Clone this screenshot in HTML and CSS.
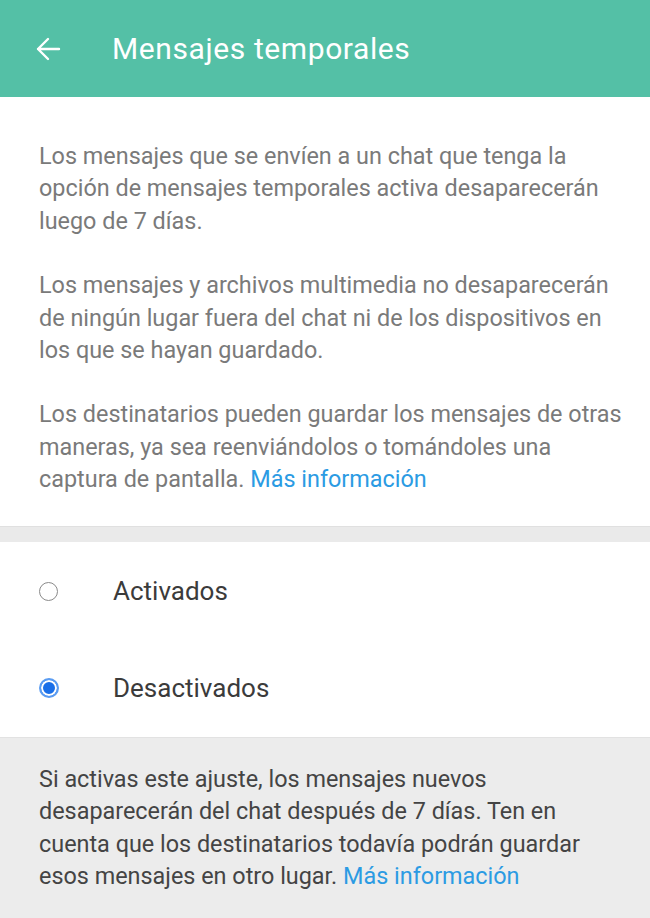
FILE: index.html
```html
<!DOCTYPE html>
<html lang="es">

<head>
    <meta charset="UTF-8">
    <meta name="viewport" content="width=device-width, initial-scale=1.0">
    <title>Mensajes temporales</title>
    <link rel="stylesheet" href="styles.css">
</head>

<body>
    <header class="topbar">
        <button class="back" aria-label="Volver">
            <svg width="28" height="28" viewBox="0 0 28 28">
                <path d="M25 14H4M14 4L4 14l10 10" fill="none" stroke="#fff" stroke-width="2.4"
                    stroke-linecap="round" stroke-linejoin="round" />
            </svg>
        </button>
        <h1>Mensajes temporales</h1>
    </header>

    <main>
        <section class="intro">
            <p>
                Los mensajes que se envíen a un chat que tenga la<br>
                opción de mensajes temporales activa desaparecerán<br>
                luego de 7 días.
            </p>
            <p>
                Los mensajes y archivos multimedia no desaparecerán<br>
                de ningún lugar fuera del chat ni de los dispositivos en<br>
                los que se hayan guardado.
            </p>
            <p>
                Los destinatarios pueden guardar los mensajes de otras<br>
                maneras, ya sea reenviándolos o tomándoles una<br>
                captura de pantalla. <a href="#">Más información</a>
            </p>
        </section>

        <div class="divider"></div>

        <section class="options">
            <label class="option">
                <span class="radio"></span>
                <span class="option-label">Activados</span>
            </label>
            <label class="option">
                <span class="radio checked"></span>
                <span class="option-label">Desactivados</span>
            </label>
        </section>

        <section class="note">
            <p>
                Si activas este ajuste, los mensajes nuevos<br>
                desaparecerán del chat después de 7 días. Ten en<br>
                cuenta que los destinatarios todavía podrán guardar<br>
                esos mensajes en otro lugar. <a href="#">Más información</a>
            </p>
        </section>
    </main>
</body>

</html>
```

FILE: styles.css
```css
body {
    margin: 0;
    width: 650px;
    height: 918px;
    overflow: hidden;
    background: #ececec;
    font-family: Roboto, "Liberation Sans", sans-serif;
}

.topbar {
    height: 97px;
    background: #54c0a6;
    display: flex;
    align-items: center;
    color: #fff;
}

.back {
    border: 0;
    background: none;
    padding: 0;
    margin: 0 50px 0 34px;
    width: 28px;
    height: 28px;
    display: flex;
}

.topbar h1 {
    margin: 0;
    font-size: 30px;
    font-weight: 400;
    letter-spacing: 0.6px;
}

a {
    color: #2b9be3;
    text-decoration: none;
}

.intro {
    background: #fff;
    padding: 43px 0 30px 39px;
    color: #7a7a7a;
    font-size: 23.4px;
    line-height: 32.4px;
    white-space: nowrap;
}

.intro p {
    margin: 0 0 32px;
}

.intro p:last-child {
    margin-bottom: 0;
}

.divider {
    height: 15px;
    background: #eaeaea;
    border-top: 1px solid #e0e0e0;
}

.options {
    background: #fff;
    padding: 1px 0 0;
    border-bottom: 1px solid #e2e2e2;
}

.option {
    height: 97px;
    display: flex;
    align-items: center;
}

.radio {
    box-sizing: border-box;
    width: 19px;
    height: 19px;
    margin: 0 55px 0 39px;
    border-radius: 50%;
    border: 1.5px solid #8a8a8a;
    background: #fff;
}

.radio.checked {
    width: 20px;
    height: 20px;
    margin: 0 54px 0 39px;
    border: 2px solid #5a9cf2;
    background: #1a6fe8;
    box-shadow: inset 0 0 0 2px #fff;
}

.option-label {
    font-size: 26px;
    color: #3b3b3b;
}

.note {
    padding: 25px 0 20px 39px;
    color: #444;
    font-size: 23.4px;
    line-height: 32.5px;
    white-space: nowrap;
}

.note p {
    margin: 0;
}
```
